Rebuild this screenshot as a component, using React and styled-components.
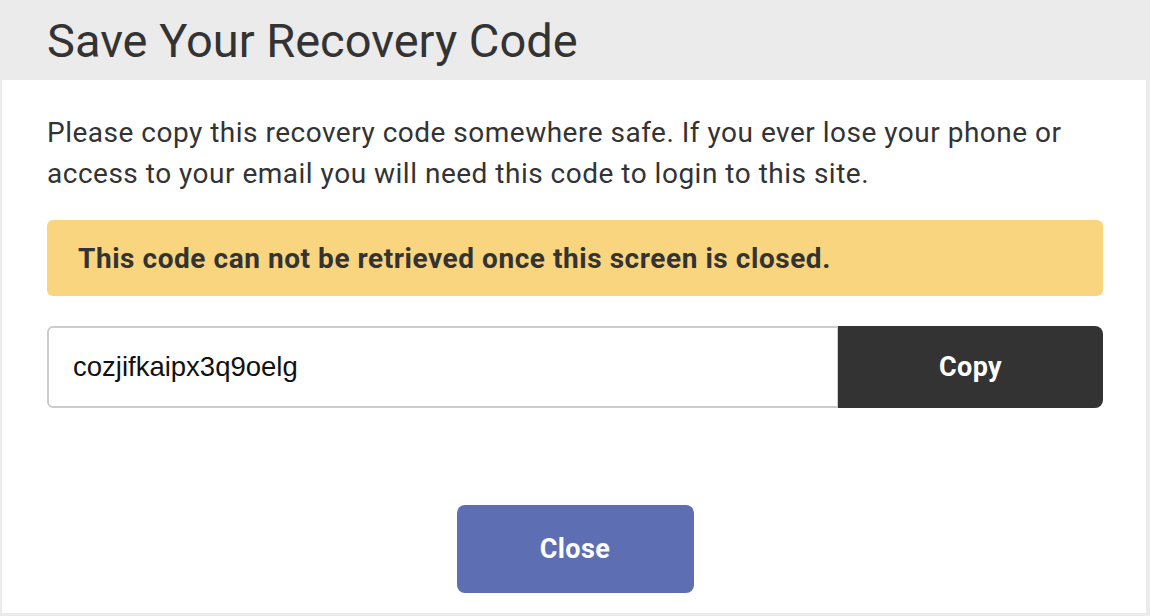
import styled, { createGlobalStyle } from 'styled-components'

const GlobalStyle = createGlobalStyle`
  html, body {
    margin: 0;
    padding: 0;
    background: #ebebeb;
  }
  body {
    font-family: Roboto, 'Noto Sans', sans-serif;
    color: #333333;
  }
`

const Modal = styled.div`
  width: 1150px;
  height: 616px;
  display: flex;
  flex-direction: column;
  background: #ebebeb;
`

const Header = styled.div`
  height: 80px;
  flex-shrink: 0;
  display: flex;
  align-items: center;
  padding-left: 47px;
  box-sizing: border-box;
`

const Title = styled.h1`
  margin: 0;
  font-size: 47px;
  font-weight: 400;
  color: #333;
`

const Body = styled.div`
  flex: 1;
  background: #fff;
  margin: 0 4px 3px 2px;
  padding: 32px 43px 0 45px;
  display: flex;
  flex-direction: column;
`

const Intro = styled.p`
  margin: 0;
  font-size: 28px;
  line-height: 41px;
  letter-spacing: 0.5px;
  color: #333;
`

const Warning = styled.div`
  margin-top: 26px;
  height: 76px;
  display: flex;
  align-items: center;
  padding: 0 31px;
  background: #f8d57e;
  border-radius: 6px;
  font-size: 28px;
  font-weight: 700;
  letter-spacing: 0.55px;
  color: #333;
`

const CodeRow = styled.div`
  margin-top: 30px;
  display: flex;
  height: 82px;
`

const CodeInput = styled.input`
  flex: 1;
  min-width: 0;
  box-sizing: border-box;
  height: 100%;
  border: 2px solid #cccccc;
  border-right-width: 1px;
  border-radius: 6px 0 0 6px;
  padding: 0 24px;
  font-family: 'Liberation Sans', Arial, sans-serif;
  font-size: 27.5px;
  color: #111;
  background: #fff;
  outline: none;
`

const Button = styled.button`
  border: none;
  border-radius: ${({ $radius }) => $radius || '8px'};
  background: ${({ $bg }) => $bg};
  color: #fff;
  font-family: Roboto, sans-serif;
  font-weight: 700;
  font-size: 27px;
  letter-spacing: 0.4px;
  cursor: pointer;
`

const CopyButton = styled(Button)`
  width: 265px;
  height: 100%;
`

const Footer = styled.div`
  margin-top: 97px;
  display: flex;
  justify-content: center;
`

const CloseButton = styled(Button)`
  width: 237px;
  height: 88px;
`

export default function App() {
  return (
    <>
      <GlobalStyle />
      <Modal>
        <Header>
          <Title>Save Your Recovery Code</Title>
        </Header>
        <Body>
          <Intro>
            Please copy this recovery code somewhere safe. If you ever lose your phone or
            access to your email you will need this code to login to this site.
          </Intro>
          <Warning>This code can not be retrieved once this screen is closed.</Warning>
          <CodeRow>
            <CodeInput readOnly value="cozjifkaipx3q9oelg" />
            <CopyButton $bg="#333333" $radius="0 8px 8px 0">Copy</CopyButton>
          </CodeRow>
          <Footer>
            <CloseButton $bg="#5e6eb3">Close</CloseButton>
          </Footer>
        </Body>
      </Modal>
    </>
  )
}
